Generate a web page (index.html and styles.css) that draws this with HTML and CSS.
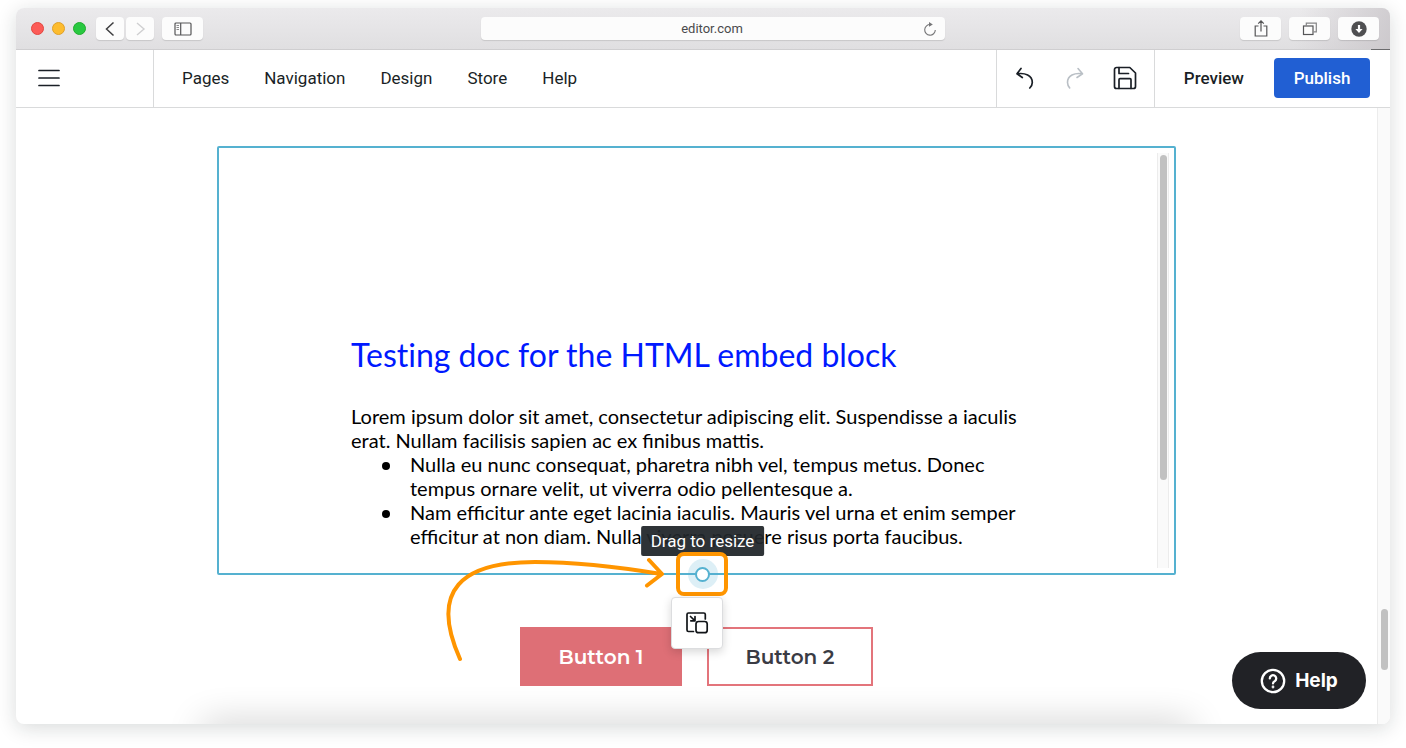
FILE: index.html
```html
<!DOCTYPE html>
<html lang="en">
<head>
<meta charset="utf-8">
<meta name="viewport" content="width=device-width, initial-scale=1">
<title>Site editor</title>
<link rel="stylesheet" href="styles.css">
</head>
<body>
<div class="window">
  <header class="titlebar">
    <div class="titlebar-left">
      <span class="light light-close"></span>
      <span class="light light-min"></span>
      <span class="light light-max"></span>
      <div class="history">
        <button class="chrome-btn" type="button" aria-label="Back">
          <svg width="12" height="16" viewBox="0 0 12 16" fill="none" stroke="#3f3f41" stroke-width="1.5"><path d="M9.5 1.5 2.5 8l7 6.5"/></svg>
        </button>
        <button class="chrome-btn" type="button" aria-label="Forward">
          <svg width="12" height="16" viewBox="0 0 12 16" fill="none" stroke="#cfcfd1" stroke-width="1.4"><path d="M3 2l7 6-7 6"/></svg>
        </button>
      </div>
      <button class="chrome-btn chrome-btn-wide" type="button" aria-label="Sidebar">
        <svg width="18" height="14" viewBox="0 0 18 14" fill="none" stroke="#555557" stroke-width="1.2"><rect x="1" y="1" width="16" height="12" rx="1"/><path d="M6.7 1v12"/><path d="M2.5 3.5h2.5M2.5 5.5h2.5M2.5 7.5h2.5" stroke="#8a8a8c" stroke-width="1"/></svg>
      </button>
    </div>
    <div class="address">
      <input class="address-input" type="text" value="editor.com" aria-label="Address">
      <button class="reload" type="button" aria-label="Reload">
        <svg width="14" height="16" viewBox="0 0 14 16" fill="none" stroke="#757577" stroke-width="1.1"><path d="M7.5 3.6A5.300 5.300 0 1 0 12.300 9"/><path d="M6 1 9.800 3.500 6 5.800z" fill="#757577" stroke="none"/></svg>
      </button>
    </div>
    <div class="titlebar-right">
      <button class="chrome-btn chrome-btn-wide" type="button" aria-label="Share">
        <svg width="14" height="18" viewBox="0 0 14 18" fill="none" stroke="#555557" stroke-width="1.2"><path d="M4.500 6H1.200v10h11.600v-10H9.500M7 11.500V1M4.200 3.700 7 .9l2.800 2.800"/></svg>
      </button>
      <button class="chrome-btn chrome-btn-wide" type="button" aria-label="Tabs">
        <svg width="16" height="16" viewBox="0 0 16 16" fill="none" stroke="#555557" stroke-width="1.2"><rect x="1.500" y="5" width="9.500" height="8.500"/><path d="M4.300 4.800V2.200h10v8.600H11.500" stroke="#858587"/></svg>
      </button>
      <button class="chrome-btn chrome-btn-wide" type="button" aria-label="Downloads">
        <svg width="16" height="16" viewBox="0 0 16 16"><circle cx="8" cy="8" r="7.700" fill="#4f4f51"/><path d="M6.900 4h2.200v4h2.500L8 12 4.400 8h2.500z" fill="#fff"/></svg>
      </button>
    </div>
  </header>

  <div class="toolbar">
    <div class="toolbar-menu">
      <button class="icon-btn" type="button" aria-label="Menu">
        <svg width="22" height="18" viewBox="0 0 22 18" fill="none" stroke="#1a1f26" stroke-width="1.700" stroke-linecap="round"><path d="M1 1.500h20M1 9h20M1 16.500h20"/></svg>
      </button>
    </div>
    <nav class="nav">
      <a class="nav-link" href="#pages">Pages</a>
      <a class="nav-link" href="#navigation">Navigation</a>
      <a class="nav-link" href="#design">Design</a>
      <a class="nav-link" href="#store">Store</a>
      <a class="nav-link" href="#help">Help</a>
    </nav>
    <div class="tools">
      <button class="icon-btn" type="button" aria-label="Undo">
        <svg width="24" height="24" viewBox="0 0 24 24" fill="none" stroke="#1a1f26" stroke-width="1.700" stroke-linecap="round" stroke-linejoin="round"><path d="M8 2.500 4 7.800l5.300 3.700M4 7.800c8-1.200 15.300 1.500 15.300 8.700 0 2-.9 3.900-2.500 5.500"/></svg>
      </button>
      <button class="icon-btn" type="button" aria-label="Redo" disabled>
        <svg width="24" height="24" viewBox="0 0 24 24" fill="none" stroke="#b9bfc5" stroke-width="1.600" stroke-linecap="round" stroke-linejoin="round"><path d="M15 2.500l4.500 5.300L14 11.500M19.500 7.800C11.500 6.600 4.500 9.300 4.500 16.500c0 2 .9 3.900 2.200 5.500"/></svg>
      </button>
      <button class="icon-btn" type="button" aria-label="Save">
        <svg width="24" height="24" viewBox="0 0 24 24" fill="none" stroke="#1a1f26" stroke-width="1.700" stroke-linecap="round" stroke-linejoin="round"><path d="M3.500 1.500h13.300L22.500 7v13.500a2 2 0 0 1-2 2h-17a2 2 0 0 1-2-2v-17a2 2 0 0 1 2-2z"/><path d="M6 1.700v5.800h9.500M6 22.300v-8.600a1 1 0 0 1 1-1h10a1 1 0 0 1 1 1v8.600"/></svg>
      </button>
    </div>
    <div class="publish-group">
      <button class="preview" type="button">Preview</button>
      <button class="publish" type="button">Publish</button>
    </div>
  </div>

  <div class="page">
    <main class="canvas">
      <section class="embed">
        <div class="doc">
          <h1 class="doc-title">Testing doc for the HTML embed block</h1>
          <p class="doc-text">Lorem ipsum dolor sit amet, consectetur adipiscing elit. Suspendisse a iaculis erat. Nullam facilisis sapien ac ex finibus mattis.</p>
          <ul class="doc-list">
            <li>Nulla eu nunc consequat, pharetra nibh vel, tempus metus. Donec tempus ornare velit, ut viverra odio pellentesque a.</li>
            <li>Nam efficitur ante eget lacinia iaculis. Mauris vel urna et enim semper efficitur at non diam. Nulla viverra posuere risus porta faucibus.</li>
          </ul>
        </div>
        <div class="embed-track"><div class="embed-thumb"></div></div>

        <div class="tooltip" role="tooltip">Drag to resize</div>
        <button class="handle" type="button" aria-label="Drag to resize"><span class="handle-dot"></span></button>
        <div class="highlight"></div>
        <svg class="arrow" width="230" height="116" viewBox="440 550 230 116" fill="none" stroke="#ff9500" stroke-width="4" stroke-linecap="round" stroke-linejoin="round"><path d="M460 659C429 590 462 562 535 562 580 562 625 568 661 574M649 560l13 14-15 11.500"/></svg>
        <button class="resize-tool" type="button" aria-label="Change size">
          <svg width="24" height="24" viewBox="0 0 24 24" fill="none" stroke="#111418" stroke-width="1.700" stroke-linecap="round" stroke-linejoin="round"><path d="M8.500 20.500H3.500a1.500 1.500 0 0 1-1.500-1.500V3.500A1.500 1.500 0 0 1 3.500 2h15.300a1.500 1.500 0 0 1 1.500 1.500V8"/><rect x="11" y="10.500" width="11.200" height="11.200" rx="2.500"/><path d="M5.500 5.500 9.500 9.300M10 5.500v4.300H5.800"/></svg>
        </button>
      </section>
      <div class="button-row">
        <button class="cta cta-solid" type="button">Button 1</button>
        <button class="cta cta-outline" type="button">Button 2</button>
      </div>
      <div class="lower-shade"></div>
    </main>
    <div class="page-track"><div class="page-thumb"></div></div>
    <button class="help" type="button">
      <svg width="26" height="26" viewBox="0 0 26 26" fill="none" stroke="#fff" stroke-width="2.300" stroke-linecap="round"><circle cx="13" cy="13" r="11.200"/><path d="M9.800 10.400a3.200 3.200 0 1 1 5.100 2.600c-1.200.8-1.900 1.200-1.900 2.400"/><circle cx="13" cy="19" r=".5" stroke-width="1.800"/></svg>
      Help
    </button>
  </div>
</div>
</body>
</html>
```
FILE: styles.css
```css
* { box-sizing: border-box; }

body {
  margin: 0;
  min-height: 100vh;
  padding: 8px 16px 24px;
  display: flex;
  background: #fff;
  font-family: Roboto, "Liberation Sans", sans-serif;
  color: #1a1f26;
}

button, input {
  font: inherit;
  color: inherit;
  border: 0;
  padding: 0;
  margin: 0;
  background: none;
}

svg { display: block; }

.window {
  flex: 1;
  min-width: 0;
  display: flex;
  flex-direction: column;
  border-radius: 8px;
  background: #fff;
  box-shadow: 0 4px 20px rgba(20, 30, 28, 0.16);
}

/* Browser chrome */
.titlebar {
  position: relative;
  display: grid;
  grid-template-columns: 450fr 463fr 434fr;
  align-items: center;
  height: 42px;
  padding: 0 11px 0 15px;
  border-radius: 8px 8px 0 0;
  border-bottom: 1px solid #cfced0;
  background:
    linear-gradient(100deg, rgba(200, 196, 200, 0) 93%, rgba(200, 196, 200, 0.8) 100%),
    linear-gradient(#ebeaec, #e0dfe1);
}
.titlebar::after {
  content: "";
  position: absolute;
  right: 0;
  bottom: -1px;
  width: 19px;
  height: 1px;
  background: #6b6b6d;
}

.titlebar-left { display: flex; align-items: center; gap: 8px; }

.light { width: 13px; height: 13px; border-radius: 50%; border: 1px solid; }
.light-close { background: #fc5b57; border-color: #e2463f; }
.light-min { background: #fdbc2e; border-color: #e0a028; }
.light-max { background: #28c840; border-color: #1fac2c; }

.history { display: flex; gap: 2px; margin-left: 2px; }

.chrome-btn {
  display: flex;
  align-items: center;
  justify-content: center;
  width: 28px;
  height: 23px;
  border-radius: 4px;
  background: #fcfcfc;
  box-shadow: 0 1px 1px rgba(0, 0, 0, 0.12);
}
.chrome-btn-wide { width: 41px; }

.address {
  display: flex;
  align-items: center;
  height: 23px;
  padding: 0 8px 0 20px;
  border-radius: 4px;
  background: #fcfcfc;
  box-shadow: 0 1px 1px rgba(0, 0, 0, 0.12);
}
.address-input {
  flex: 1;
  min-width: 0;
  text-align: center;
  font-size: 13px;
  line-height: 20px;
  color: #4a4a4c;
}

.titlebar-right { display: flex; justify-content: flex-end; gap: 8px; }

/* Editor toolbar */
.toolbar {
  display: flex;
  height: 58px;
  border-bottom: 1px solid #d9dadb;
  font-size: 17px;
  line-height: 24px;
}
.toolbar-menu {
  display: flex;
  align-items: center;
  width: 138px;
  padding: 0 0 2px 22px;
  border-right: 1px solid #d9dadb;
}
.nav { flex: 1; display: flex; align-items: center; gap: 35px; padding: 0 0 2px 28px; }
.nav-link { color: inherit; text-decoration: none; }

.tools {
  display: flex;
  align-items: center;
  gap: 26px;
  padding: 0 17px 2px 16px;
  border-left: 1px solid #d9dadb;
  border-right: 1px solid #d9dadb;
}
.publish-group { display: flex; align-items: center; gap: 30px; padding: 0 20px 2px 29px; }
.preview { font-weight: 500; }
.publish {
  width: 96px;
  height: 40px;
  border-radius: 4px;
  background: #215fd3;
  color: #fff;
  font-weight: 500;
}

/* Page being edited */
.page { position: relative; flex: 1; display: flex; }

.canvas {
  flex: 1;
  min-width: 0;
  display: flex;
  flex-direction: column;
  align-items: center;
  padding-top: 38px;
  overflow: hidden;
  border-radius: 0 0 0 8px;
}

.embed {
  position: relative;
  display: flex;
  justify-content: space-between;
  width: 100%;
  max-width: 959px;
  padding: 5px 5px 5px 132px;
  border: 2px solid #55b1d0;
  border-radius: 2px;
}

.doc {
  max-width: 693px;
  padding: 182px 0 20px;
  font-family: Lato, sans-serif;
  font-size: 20px;
  line-height: 24px;
  color: #000;
}
.doc-title {
  margin: 0 0 29px;
  font-size: 32px;
  line-height: 40px;
  font-weight: 400;
  font-variant-ligatures: none;
  color: #0019ff;
}
.doc-text { margin: 0; }
.doc-list { margin: 0; padding: 0 0 0 31px; list-style: none; }
.doc-list li { display: flex; gap: 20px; }
.doc-list li::before {
  content: "";
  flex: none;
  width: 8px;
  height: 8px;
  margin-top: 10px;
  border-radius: 50%;
  background: #000;
}

.embed-track {
  width: 12px;
  padding: 2px;
  border: 1px solid #ececec;
  border-width: 0 1px;
  background: #fafafa;
}
.embed-thumb { width: 7px; height: 325px; border-radius: 4px; background: #c1c1c1; }

/* Resize controls and callout, drawn over the block's lower edge */
.tooltip {
  position: absolute;
  bottom: 17px;
  left: calc(50% + 6px);
  transform: translateX(-50%);
  padding: 3px 10px;
  border-radius: 2px;
  background: rgba(33, 38, 43, 0.94);
  color: #fff;
  font-size: 17px;
  line-height: 24px;
  white-space: nowrap;
}
.handle {
  position: absolute;
  bottom: -16px;
  left: calc(50% - 9px);
  display: grid;
  place-items: center;
  width: 30px;
  height: 30px;
  border-radius: 50%;
  background: rgba(85, 177, 208, 0.2);
}
.handle-dot {
  width: 15px;
  height: 15px;
  border: 2px solid #55b1d0;
  border-radius: 50%;
  background: #fff;
}
.highlight {
  position: absolute;
  bottom: -23px;
  left: calc(50% - 21px);
  width: 52px;
  height: 44px;
  border: 4px solid #ff9500;
  border-radius: 8px;
}
.arrow { position: absolute; bottom: -93px; left: calc(50% - 257px); }
.resize-tool {
  position: absolute;
  z-index: 1;
  bottom: -76px;
  left: calc(50% - 26px);
  display: grid;
  place-items: center;
  width: 52px;
  height: 52px;
  border: 1px solid #dcdddf;
  border-radius: 4px;
  background: #fff;
  box-shadow: 0 3px 10px rgba(0, 0, 0, 0.16);
}

.button-row { display: flex; gap: 25px; margin-top: 52px; }
.cta {
  height: 59px;
  font-family: Montserrat, Inter, sans-serif;
  font-size: 20px;
  line-height: 24px;
  font-weight: 600;
}
.cta-solid { width: 162px; background: #de6f76; color: #fff; }
.cta-outline { width: 166px; border: 2px solid #e3747b; color: #3a3b44; }

.lower-shade {
  width: 990px;
  max-width: 80%;
  height: 20px;
  margin-top: auto;
  margin-bottom: -20px;
  border-radius: 10px;
  box-shadow: 0 0 36px 2px rgba(0, 0, 0, 0.2);
}

.page-track {
  width: 13px;
  padding: 501px 2px 0 3px;
  border-left: 1px solid #ececec;
  border-radius: 0 0 8px 0;
  background: #fafafa;
}
.page-thumb { height: 61px; border-radius: 4px; background: #c1c1c1; }

.help {
  position: absolute;
  right: 24px;
  bottom: 15px;
  display: flex;
  align-items: center;
  justify-content: center;
  gap: 9px;
  width: 134px;
  height: 57px;
  border-radius: 29px;
  background: #212226;
  color: #fff;
  font-family: Inter, sans-serif;
  font-size: 19px;
  line-height: 24px;
  font-weight: 700;
}
```
